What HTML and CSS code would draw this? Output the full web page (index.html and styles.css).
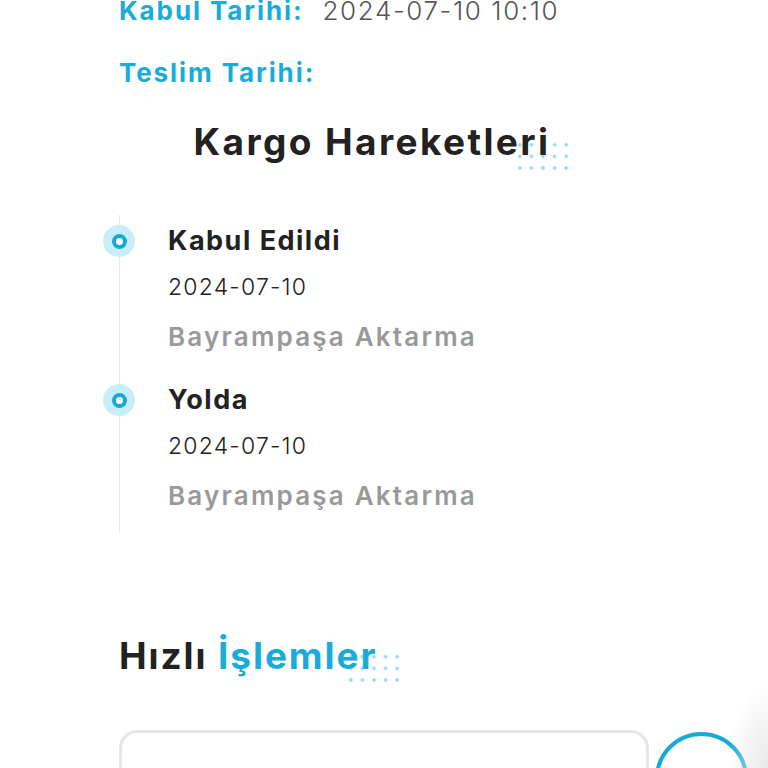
FILE: index.html
```html
<!DOCTYPE html>
<html lang="tr">
<head>
<meta charset="utf-8">
<link rel="stylesheet" href="styles.css">
</head>
<body>
<div class="page">
  <div class="info">
    <div class="info-row"><span class="info-label">Kabul Tarihi:</span><span class="info-value">2024-07-10 10:10</span></div>
    <div class="info-row"><span class="info-label">Teslim Tarihi:</span><span class="info-value"></span></div>
  </div>

  <div class="section-head center">
    <h2 class="title">Kargo Hareketleri<span class="dots"></span></h2>
  </div>

  <div class="timeline">
    <div class="tl-item">
      <span class="tl-dot"></span>
      <div class="tl-title">Kabul Edildi</div>
      <div class="tl-date">2024-07-10</div>
      <div class="tl-place">Bayrampaşa Aktarma</div>
    </div>
    <div class="tl-item">
      <span class="tl-dot"></span>
      <div class="tl-title">Yolda</div>
      <div class="tl-date">2024-07-10</div>
      <div class="tl-place">Bayrampaşa Aktarma</div>
    </div>
  </div>

  <h2 class="title quick">Hızlı <span class="accent">İşlemler</span><span class="dots dots-q"></span></h2>

  <div class="quick-row">
    <div class="quick-box"></div>
    <div class="quick-btn">
      <svg width="20" height="20" viewBox="0 0 20 20"><path d="M6 2 L14 10 L6 18" fill="none" stroke="#888" stroke-width="2"/></svg>
    </div>
  </div>
</div>
</body>
</html>
```

FILE: styles.css
```css
html, body {
  margin: 0;
  padding: 0;
  background: #fff;
  overflow: hidden;
}
body {
  font-family: "Inter", "Noto Sans", sans-serif;
  color: #222;
}
.page {
  width: 768px;
  height: 768px;
  overflow: hidden;
  position: relative;
  padding-left: 119px;
  box-sizing: border-box;
}
.page::after {
  content: "";
  position: absolute;
  right: 0;
  top: 670px;
  width: 70px;
  height: 100px;
  background: radial-gradient(ellipse 40px 90px at 100% 100%, rgba(232,232,232,1), rgba(255,255,255,0));
}
.info {
  margin-top: -21px;
}
.info-row {
  display: flex;
  height: 62px;
  align-items: center;
}
.info-label {
  color: #19acd9;
  font-weight: 700;
  font-size: 26px;
  letter-spacing: 1.9px;
}
.info-value {
  color: #555;
  font-weight: 300;
  font-size: 26px;
  margin-left: 19px;
  letter-spacing: 1.6px;
}
.section-head.center {
  width: 506px;
  text-align: center;
  margin-top: 14px;
}
.title {
  display: inline-block;
  position: relative;
  z-index: 0;
  margin: 0;
  font-weight: 700;
  font-size: 37px;
  line-height: 50px;
  letter-spacing: 2.4px;
  color: #222;
}
.dots {
  position: absolute;
  right: -22px;
  bottom: -7px;
  width: 58px;
  height: 35px;
  background-image: radial-gradient(circle, #9fdcee 1.5px, rgba(255,255,255,0) 2.1px);
  background-size: 11.6px 11.6px;
  background-position: 0 0;
  z-index: -1;
}
.timeline {
  margin-top: 48px;
  border-left: 1.5px solid #e6e6e6;
}
.tl-item {
  position: relative;
  padding-left: 48px;
  height: 159px;
}
.tl-dot {
  position: absolute;
  left: -17px;
  top: 10px;
  width: 32px;
  height: 32px;
  border-radius: 50%;
  background: #c8eef9;
  display: flex;
}
.tl-dot::after {
  content: "";
  margin: auto;
  width: 7px;
  height: 7px;
  border: 4px solid #15a9d6;
  background: #fff;
  border-radius: 50%;
}
.tl-title {
  font-weight: 700;
  font-size: 27px;
  line-height: 52px;
  color: #222;
  letter-spacing: 1.5px;
}
.tl-date {
  font-weight: 300;
  font-size: 23px;
  line-height: 40px;
  color: #222;
  letter-spacing: 1.2px;
}
.tl-place {
  font-weight: 600;
  font-size: 26px;
  line-height: 60px;
  color: #999;
  letter-spacing: 2.2px;
}
.quick {
  margin-top: 98px;
  font-size: 37px;
  letter-spacing: 1.9px;
}
.accent {
  color: #19acd9;
}
.dots-q {
  right: -26px;
  bottom: -5px;
}
.quick-row {
  display: flex;
  gap: 6px;
  margin-top: 49px;
}
.quick-box {
  width: 530px;
  height: 80px;
  border: 3px solid #e6e6e6;
  border-radius: 18px;
  box-sizing: border-box;
  flex: none;
}
.quick-btn {
  flex: none;
  width: 93px;
  height: 93px;
  border: 4px solid #16aad7;
  border-radius: 50%;
  box-sizing: border-box;
  margin-top: 2px;
  display: flex;
  align-items: center;
  justify-content: center;
  padding-top: 50px;
  padding-left: 6px;
}
```
